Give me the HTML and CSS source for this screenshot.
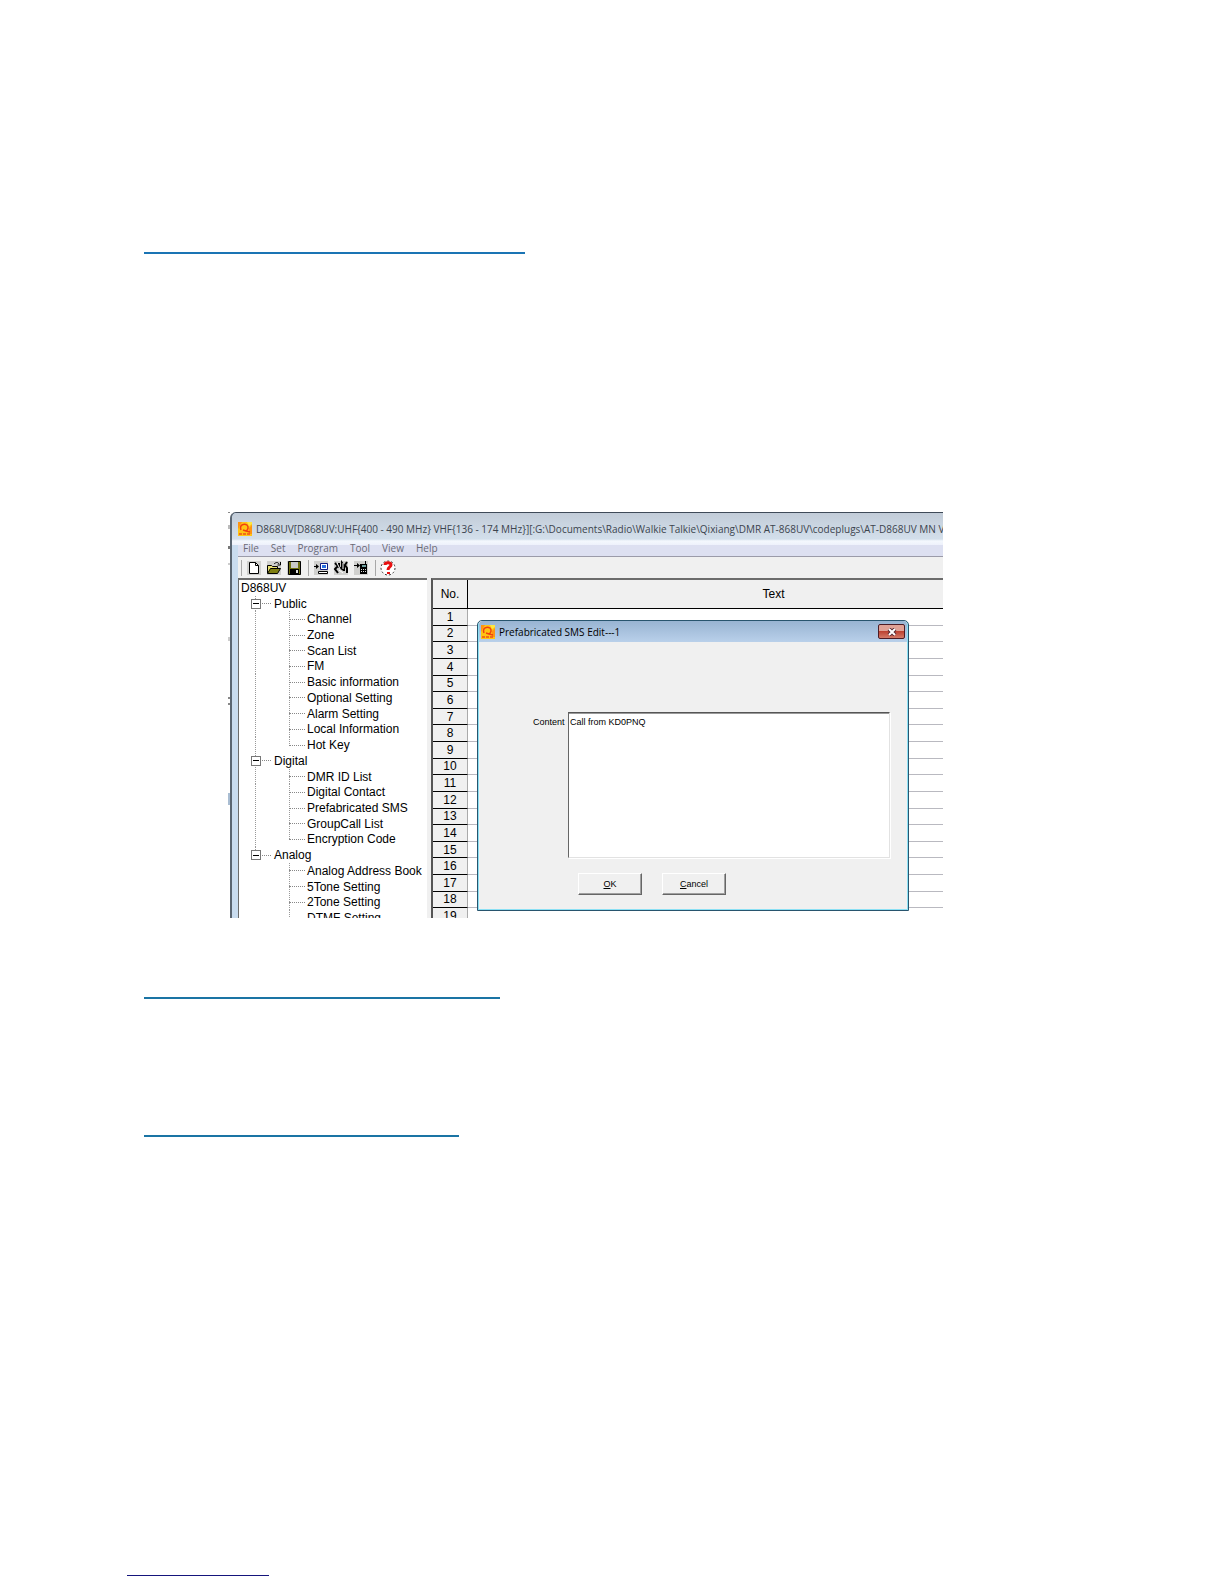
FILE: index.html
```
<!DOCTYPE html>
<html lang="en">
<head>
  <meta charset="UTF-8">
  <meta name="viewport" content="width=device-width, initial-scale=1.0">
  <title>Prefabricated SMS</title>
  <link rel="stylesheet" href="styles.css">
</head>
<body>
  <svg class="defs" width="0" height="0">
    <symbol id="logo" viewBox="0 0 14 14">
      <path fill="#ffc414" d="M0 0h14v14H0z"/>
      <path fill="#ff9412" d="M0 0h4L0 7zM11 6l3-3v9h-3z"/>
      <path fill="#ffe640" d="M9 0h5v2l-3 2z"/>
      <path fill="none" stroke="#f04010" stroke-width="1.500" d="M3 8C1 3 6 1 9 3c2 2 1 5-1 6M5 8l3 1 4 1"/>
      <path stroke="#f0501a" stroke-width="1.500" stroke-dasharray="3 1" d="M1 12h12"/>
    </symbol>
  </svg>

  <main class="page">
    <hr class="rule rule-first">

    <figure class="shot">
      <div class="sliver"></div>
      <section class="window">
        <header class="titlebar">
          <svg class="logo"><use href="#logo"/></svg>
          <span class="title">D868UV[D868UV:UHF{400 - 490 MHz} VHF{136 - 174 MHz}][:G:\Documents\Radio\Walkie Talkie\Qixiang\DMR AT-868UV\codeplugs\AT-D868UV MN V</span>
        </header>

        <nav class="menubar">
          <a href="#">File</a>
          <a href="#">Set</a>
          <a href="#">Program</a>
          <a href="#">Tool</a>
          <a href="#">View</a>
          <a href="#">Help</a>
        </nav>

        <div class="toolbar">
          <div class="tools">
            <button type="button" aria-label="New">
              <svg viewBox="0 0 16 16"><path fill="#d0d0ce" d="M1 1h14v14H1z"/><path fill="#fff" stroke="#000" d="M3.500 2.500h6l3 3v8h-9z"/><path fill="none" stroke="#000" d="M9.500 2.500v3h3"/></svg>
            </button>
            <button type="button" aria-label="Open">
              <svg viewBox="0 0 16 16"><path fill="#d0d0ce" d="M1 1h14v14H1z"/><path fill="#e8e070" stroke="#000" d="M1.500 13V5.500h4l1 1h5v2"/><path fill="#7f7f10" stroke="#000" d="M1.500 13.500l3-5h10l-3 5z"/><path fill="none" stroke="#000" d="M8 4c2-2 4-2 5 0M14.500 2v3h-3"/></svg>
            </button>
            <button type="button" aria-label="Save">
              <svg viewBox="0 0 16 16"><path fill="#d0d0ce" d="M1 1h14v14H1z"/><path fill="#6f7010" stroke="#000" d="M2.500 1.500h12v13h-12z"/><path fill="#c8c8c8" d="M5 2h7v6H5z"/><path fill="#000" d="M4 9h9v5H4z"/><path fill="#ddd" d="M10 10h2v3h-2z"/></svg>
            </button>
          </div>
          <div class="tools">
            <button type="button" aria-label="Read from radio">
              <svg viewBox="0 0 16 16"><path fill="#d0d0ce" d="M1 1h14v14H1z"/><path stroke="#000" d="M1 6.500h4"/><path fill="#000" d="M3 4l3 2.500L3 9z"/><path fill="#fff" stroke="#111c80" d="M7.500 3.500h7v6h-7z"/><path fill="#2870e0" d="M9 5h4v3H9z"/><path fill="#fff" stroke="#000" d="M5.500 11.500h9v2h-9z"/></svg>
            </button>
            <button type="button" aria-label="Find port">
              <svg viewBox="0 0 16 16"><path fill="#d0d0ce" d="M1 1h14v14H1z"/><path fill="none" stroke="#000" stroke-width="2" d="M2 3l3 3-3 3 3 4M6 3v4l3 2V3l2 3v5M14 2l-2 3 2 3v5"/><path fill="none" stroke="#fff" d="M4 3l3 6M10 3v6M6 10l4 3"/></svg>
            </button>
            <button type="button" aria-label="Write to radio">
              <svg viewBox="0 0 16 16"><path fill="#d0d0ce" d="M1 1h14v14H1z"/><path stroke="#000" d="M1 5.500h4"/><path fill="#000" d="M4 3l3 2.500L4 8zM12 1h1v4h-1zM7 4h7v10H7z"/><path fill="#70a0a0" d="M9 5h4v2H9z"/><path stroke="#ddd" stroke-dasharray="1 1" d="M8 9.500h5M8 11.500h5"/></svg>
            </button>
          </div>
          <div class="tools">
            <button type="button" aria-label="About">
              <svg viewBox="0 0 16 16"><circle cx="8" cy="8" r="7" fill="#fff" stroke="#333" stroke-dasharray="2 2"/><path fill="none" stroke="#e81010" stroke-width="3" d="M5 5c0-3 6-3 6 0 0 2-3 2-3 5"/><path fill="#e81010" d="M7 12h3v2H7z"/></svg>
            </button>
          </div>
        </div>

        <div class="workspace">
          <ul class="tree">
            <li class="root">D868UV</li>
            <li class="branch"><i class="box"></i>Public</li>
            <li class="leaf"><span>Channel</span></li>
            <li class="leaf"><span>Zone</span></li>
            <li class="leaf"><span>Scan List</span></li>
            <li class="leaf"><span>FM</span></li>
            <li class="leaf"><span>Basic information</span></li>
            <li class="leaf"><span>Optional Setting</span></li>
            <li class="leaf"><span>Alarm Setting</span></li>
            <li class="leaf"><span>Local Information</span></li>
            <li class="leaf last"><span>Hot Key</span></li>
            <li class="branch"><i class="box"></i>Digital</li>
            <li class="leaf"><span>DMR ID List</span></li>
            <li class="leaf"><span>Digital Contact</span></li>
            <li class="leaf"><span>Prefabricated SMS</span></li>
            <li class="leaf"><span>GroupCall List</span></li>
            <li class="leaf last"><span>Encryption Code</span></li>
            <li class="branch end"><i class="box"></i>Analog</li>
            <li class="leaf alone"><span>Analog Address Book</span></li>
            <li class="leaf alone"><span>5Tone Setting</span></li>
            <li class="leaf alone"><span>2Tone Setting</span></li>
            <li class="leaf alone"><span>DTMF Setting</span></li>
          </ul>

          <div class="sheet">
            <table class="grid">
              <thead>
                <tr><th class="no">No.</th><th>Text</th></tr>
              </thead>
              <tbody>
                <tr><th>1</th><td></td></tr>
                <tr><th>2</th><td></td></tr>
                <tr><th>3</th><td></td></tr>
                <tr><th>4</th><td></td></tr>
                <tr><th>5</th><td></td></tr>
                <tr><th>6</th><td></td></tr>
                <tr><th>7</th><td></td></tr>
                <tr><th>8</th><td></td></tr>
                <tr><th>9</th><td></td></tr>
                <tr><th>10</th><td></td></tr>
                <tr><th>11</th><td></td></tr>
                <tr><th>12</th><td></td></tr>
                <tr><th>13</th><td></td></tr>
                <tr><th>14</th><td></td></tr>
                <tr><th>15</th><td></td></tr>
                <tr><th>16</th><td></td></tr>
                <tr><th>17</th><td></td></tr>
                <tr><th>18</th><td></td></tr>
                <tr><th>19</th><td></td></tr>
              </tbody>
            </table>
          </div>
        </div>

        <form class="dialog">
          <header class="dialog-title">
            <svg class="logo"><use href="#logo"/></svg>
            <span>Prefabricated SMS Edit---1</span>
            <button type="button" class="close" aria-label="Close">
              <svg viewBox="0 0 10 8"><path stroke="#5a2a30" stroke-width="4" d="M2 1l6 6M8 1L2 7"/><path stroke="#fff" stroke-width="2" d="M2 1l6 6M8 1L2 7"/></svg>
            </button>
          </header>
          <div class="dialog-body">
            <div class="field">
              <label for="content">Content</label>
              <textarea id="content" spellcheck="false">Call from KD0PNQ</textarea>
            </div>
            <div class="actions">
              <button type="button"><u>O</u>K</button>
              <button type="button"><u>C</u>ancel</button>
            </div>
          </div>
        </form>
      </section>
    </figure>

    <hr class="rule rule-second">
    <hr class="rule rule-third">
    <hr class="footer-rule">
  </main>
</body>
</html>
```
FILE: styles.css
```
* {
  box-sizing: border-box;
}
body {
  margin: 0;
  background: #fff;
  color: #000;
  font-family: "Liberation Sans", Arial, sans-serif;
  font-size: 12px;
}
.defs {
  position: absolute;
}
.page {
  display: flex;
  flex-direction: column;
  padding: 252px 144px 8px;
}

/* Heading underlines */
.rule {
  height: 2px;
  margin: 0;
  border: none;
  background: #1a74b4;
}
.rule-first {
  width: 381px;
}
.rule-second {
  width: 356px;
  margin-top: 79px;
  background: #1a74a4;
}
.rule-third {
  width: 315px;
  margin-top: 136px;
  background: #1a74a4;
}
.footer-rule {
  width: 142px;
  height: 1px;
  margin: 438px 0 0 -17px;
  border: none;
  background: #15157c;
}

/* Application window */
.shot {
  display: flex;
  height: 406px;
  margin: 258px 137px 0 84px;
  overflow: hidden;
}
.sliver {
  width: 2px;
  border-top: 1px solid #888;
  background: linear-gradient(#fff 12px, #bbb 12px 16px, #fff 16px 33px, #777 33px 36px, #fff 36px 50px, #ccc 50px 52px, #fff 52px 124px, #ccc 124px 128px, #fff 128px 184px, #888 184px 186px, #fff 186px 190px, #888 190px 192px, #fff 192px 280px, #a9bdd2 280px 292px, #fff 292px);
}
.window {
  position: relative;
  display: flex;
  flex: 1;
  flex-direction: column;
  min-width: 0;
  padding-left: 6px;
  border-top: 1px solid #3f4a58;
  border-left: 2px solid #5b6672;
  border-top-left-radius: 6px;
  background: #c9dcef;
}
.titlebar {
  display: flex;
  align-items: center;
  gap: 4px;
  height: 32px;
  margin-left: -6px;
  padding-left: 6px;
  border-top-left-radius: 5px;
  background: linear-gradient(#c2ccd8, #d3dfeb 26px, #f4f8fd 28px, #eef1fb);
  color: #3c444e;
  font-family: "Open Sans", "Noto Sans", sans-serif;
  font-size: 10px;
  white-space: nowrap;
}
.logo {
  flex: none;
  width: 14px;
  height: 14px;
}
.menubar {
  display: flex;
  align-items: center;
  gap: 12px;
  height: 12px;
  padding-left: 5px;
  border-bottom: 1px solid #9b9ba9;
  background: #dde0f1;
}
.menubar a {
  color: #6a6a76;
  font-family: "Open Sans", "Noto Sans", sans-serif;
  font-size: 10px;
  line-height: 16px;
  padding-bottom: 6px;
  text-decoration: none;
}
.toolbar {
  display: flex;
  align-items: center;
  height: 21px;
  gap: 6px;
  padding-left: 3px;
  background: #f0f0f0;
}
.tools {
  display: flex;
  gap: 4px;
  padding-left: 4px;
  border-left: 1px solid #a8a8a8;
}
.tools button {
  display: flex;
  padding: 0;
  border: none;
  background: none;
}
.tools svg {
  width: 16px;
  height: 16px;
}
.workspace {
  display: flex;
  flex: 1;
  min-height: 0;
  background: #f0f0f0;
}

/* Navigation tree */
.tree {
  --dots: repeating-linear-gradient(#999 0 1px, transparent 1px 2px);
  flex: none;
  display: grid;
  grid-auto-rows: 1fr;
  width: 189px;
  height: 348px;
  margin: 0;
  padding: 0 0 0 2px;
  border-top: 2px solid #6c6c6c;
  border-left: 1px solid #6c6c6c;
  background: #fff;
  list-style: none;
  white-space: nowrap;
}
.tree li {
  display: flex;
  align-items: center;
  min-height: 0;
  line-height: 14px;
}
.branch,
.leaf {
  margin-left: 14px;
  background: var(--dots) 0 0 / 1px 100% no-repeat;
}
.branch.end {
  background-size: 1px 50%;
}
.leaf.alone {
  background: none;
}
.branch .box {
  flex: none;
  order: -2;
  width: 10px;
  height: 10px;
  margin-left: -4px;
  border: 1px solid #777;
  background: linear-gradient(#000, #000) center / 6px 1px no-repeat #fff;
}
.branch::before {
  content: "";
  order: -1;
  width: 9px;
  margin: 0 3px 0 1px;
  border-top: 1px dotted #888;
}
.leaf span {
  display: flex;
  align-items: center;
  align-self: stretch;
  margin-left: 34px;
  background: var(--dots) 0 0 / 1px 100% no-repeat;
}
.leaf.last span {
  background-size: 1px 50%;
}
.leaf span::before {
  content: "";
  width: 16px;
  margin-right: 2px;
  border-top: 1px dotted #888;
}

/* Message grid */
.sheet {
  flex: 1;
  min-width: 0;
  margin-left: 4px;
  overflow: hidden;
  border-top: 2px solid #6c6c6c;
  border-left: 2px solid #555;
  background: #fff;
}
.grid {
  width: 646px;
  height: 345px;
  table-layout: fixed;
  border-collapse: separate;
  border-spacing: 0;
}
.grid th,
.grid td {
  padding: 0;
  border-bottom: 1px solid #b9b9c0;
  line-height: 14px;
  font-weight: normal;
}
.grid th {
  border-bottom-color: #000;
  background: #f0f0f0;
}
.grid thead th {
  height: 29px;
}
.grid .no {
  width: 35px;
  border-right: 1px solid #000;
}
.grid tbody th {
  border-right: 1px solid #aaa;
}

/* SMS edit dialog */
.dialog {
  position: absolute;
  top: 107px;
  left: 245px;
  display: flex;
  flex-direction: column;
  width: 432px;
  height: 291px;
  border: 1px solid #28556e;
  border-radius: 5px 5px 0 0;
  background: #f0f0f0;
  box-shadow: inset 1px -1px #8be0f4, inset -1px 0 #8be0f4;
}
.dialog-title {
  display: flex;
  align-items: center;
  gap: 4px;
  height: 21px;
  margin: 0 1px;
  padding: 0 2px;
  border-radius: 4px 4px 0 0;
  background: linear-gradient(#98b4d2, #b9d0ea);
  font-family: "Open Sans", "Noto Sans", sans-serif;
  font-size: 10px;
}
.close {
  display: flex;
  align-items: center;
  justify-content: center;
  width: 27px;
  height: 15px;
  margin-left: auto;
  padding: 0;
  border: 1px solid #4d1c24;
  border-radius: 2px;
  background: linear-gradient(#e0a296 45%, #bd4332 50%, #d47a68);
}
.close svg {
  width: 10px;
  height: 8px;
}
.dialog-body {
  padding: 70px 18px 0 55px;
  font-size: 9px;
}
.field {
  display: flex;
}
.field label {
  width: 35px;
  padding-top: 4px;
  line-height: 12px;
}
.field textarea {
  flex: 1;
  height: 146px;
  padding: 3px 1px;
  border: 1px solid;
  border-color: #555 #e2e2e2 #e2e2e2 #666;
  outline: 0;
  resize: none;
  background: #fff;
  box-shadow: 1px 1px #fff, inset 0 1px #999;
  font: inherit;
  line-height: 12px;
}
.actions {
  display: flex;
  gap: 20px;
  padding: 15px 0 0 45px;
}
.actions button {
  width: 64px;
  height: 22px;
  padding: 0;
  border: 1px solid;
  border-color: #fff #666 #666 #fff;
  background: #f0f0f0;
  box-shadow: inset -1px -1px #a0a0a0;
  font: inherit;
}
```
